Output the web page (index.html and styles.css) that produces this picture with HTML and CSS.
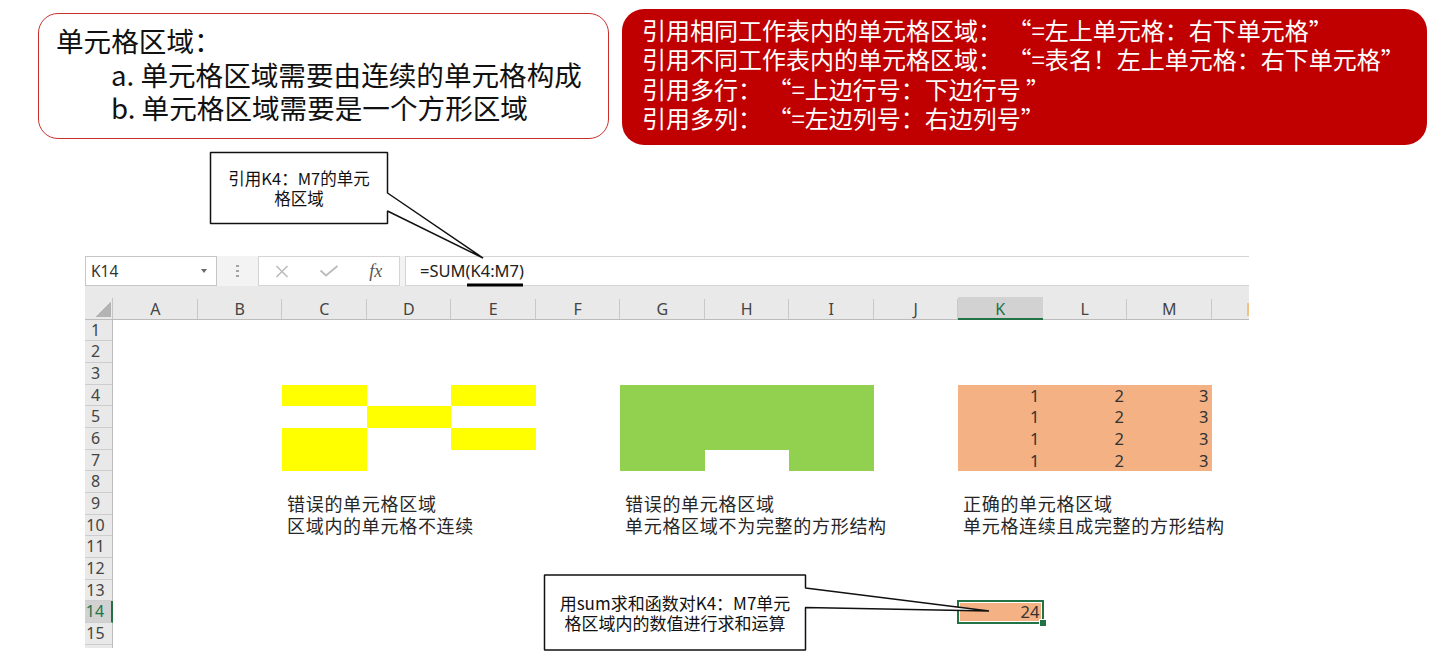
FILE: index.html
```html
<!DOCTYPE html>
<html lang="zh-CN">
<head>
<meta charset="utf-8">
<title>单元格区域</title>
<link rel="stylesheet" href="styles.css">
</head>
<body>
<header class="top">
  <div class="note">
    <p class="note-title">单元格区域：</p>
    <p class="note-item">a. 单元格区域需要由连续的单元格构成</p>
    <p class="note-item">b. 单元格区域需要是一个方形区域</p>
  </div>
  <div class="rules">
    <p>引用相同工作表内的单元格区域： <span class="qo">“</span>=左上单元格：右下单元格<span class="qc">”</span></p>
    <p>引用不同工作表内的单元格区域： <span class="qo">“</span>=表名！左上单元格：右下单元格<span class="qc">”</span></p>
    <p>引用多行： <span class="qo">“</span>=上边行号：下边行号 <span class="qc">”</span></p>
    <p>引用多列： <span class="qo">“</span>=左边列号：右边列号<span class="qc">”</span></p>
  </div>
</header>

<section class="excel">
  <div class="fbar">
    <div class="namebox"><span>K14</span><span class="caret"></span></div>
    <div class="grip"><i></i><i></i><i></i></div>
    <div class="fxbox">
      <span class="slot"><svg width="14" height="13" viewBox="0 0 14 13"><path d="M1.5 1 L12.5 12 M12.5 1 L1.5 12" stroke="#bcbcbc" stroke-width="1.6" fill="none"/></svg></span>
      <span class="slot"><svg width="20" height="12" viewBox="0 0 20 12"><path d="M1.5 5.5 L7 10.5 L18.5 1" stroke="#bcbcbc" stroke-width="1.9" fill="none"/></svg></span>
      <span class="slot fx">fx</span>
    </div>
    <div class="finput">=SUM(K4:M7)</div>
  </div>

  <div class="sheet">
    <div class="corner"></div>
    <div class="ch">A</div><div class="ch">B</div><div class="ch">C</div><div class="ch">D</div><div class="ch">E</div><div class="ch">F</div><div class="ch">G</div><div class="ch">H</div><div class="ch">I</div><div class="ch">J</div><div class="ch ch-sel">K</div><div class="ch">L</div><div class="ch">M</div><div class="ch ch-n"></div>

    <div class="rh">1</div>
    <div class="rh">2</div>
    <div class="rh">3</div>
    <div class="rh">4</div>
    <div class="rh">5</div>
    <div class="rh">6</div>
    <div class="rh">7</div>
    <div class="rh">8</div>
    <div class="rh">9</div>
    <div class="rh">10</div>
    <div class="rh">11</div>
    <div class="rh">12</div>
    <div class="rh">13</div>
    <div class="rh rh-sel">14</div>
    <div class="rh">15</div>
    <div class="rh rh-cut"></div>

    <div class="yellow a-c4"></div>
    <div class="yellow a-e4"></div>
    <div class="yellow a-d5"></div>
    <div class="yellow a-c6"></div>
    <div class="yellow a-e6"></div>

    <div class="green a-g4"></div>
    <div class="green a-g7"></div>
    <div class="green a-i7"></div>

    <div class="orange block a-k4">
      <div class="num">1</div><div class="num">2</div><div class="num">3</div>
      <div class="num">1</div><div class="num">2</div><div class="num">3</div>
      <div class="num">1</div><div class="num">2</div><div class="num">3</div>
      <div class="num">1</div><div class="num">2</div><div class="num">3</div>
    </div>

    <div class="lbl a-c9">错误的单元格区域</div>
    <div class="lbl a-c10">区域内的单元格不连续</div>
    <div class="lbl a-g9">错误的单元格区域</div>
    <div class="lbl a-g10">单元格区域不为完整的方形结构</div>
    <div class="lbl a-k9">正确的单元格区域</div>
    <div class="lbl a-k10">单元格连续且成完整的方形结构</div>

    <div class="orange num k14 a-k14">24</div>
  </div>
</section>

<svg class="overlay" width="1444" height="661" viewBox="0 0 1444 661">
  <polygon points="210.5,152.5 387.5,152.5 387.5,193 483,258 387.5,211 387.5,223.5 210.5,223.5" fill="#fff" stroke="#111" stroke-width="1.5" stroke-linejoin="bevel"/>
  <polygon points="544.5,575 805.5,575 805.5,588 989,611 805.5,607.5 805.5,650 544.5,650" fill="#fff" stroke="#111" stroke-width="1.5" stroke-linejoin="bevel"/>
  <rect x="467" y="283.5" width="56" height="3" fill="#000"/>
</svg>
<div class="callout callout-a">引用K4：M7的单元<br>格区域</div>
<div class="callout callout-b">用sum求和函数对K4：M7单元<br>格区域内的数值进行求和运算</div>
</body>
</html>
```

FILE: styles.css
```css
* { box-sizing: border-box; }
html, body { margin: 0; padding: 0; }
body {
  position: relative;
  width: 1444px;
  height: 661px;
  overflow: hidden;
  background: #fff;
  color: #000;
  font-family: "Noto Sans CJK SC", "Noto Sans", sans-serif;
}
p { margin: 0; }

/* ---------- top notes ---------- */
.top {
  display: flex;
  align-items: flex-start;
  gap: 13px;
  height: 145px;
  padding: 9px 0 0 38px;
}
.note {
  flex: none;
  width: 571px;
  height: 126px;
  margin-top: 4px;
  padding: 10px 0 0 17px;
  border: 1.5px solid #c9302c;
  border-radius: 20px;
  font-size: 27.6px;
  line-height: 33.5px;
  color: #111;
  white-space: nowrap;
}
.note-item { padding-left: 55px; }
.rules {
  flex: none;
  width: 805px;
  height: 136px;
  padding: 5.5px 0 0 20px;
  border-radius: 22px;
  background: #c00000;
  color: #fff;
  font-size: 24px;
  line-height: 29.6px;
  white-space: nowrap;
}
.qo {
  display: inline-block;
  width: 1em;
  text-align: right;
}
.qc {
  display: inline-block;
  width: 1em;
  text-align: left;
}

/* ---------- excel ---------- */
.excel {
  width: 1164px;
  margin: 111px 0 0 85px;
}
.fbar {
  display: flex;
  height: 30px;
  background: #f3f3f3;
}
.namebox {
  flex: none;
  display: flex;
  align-items: center;
  justify-content: space-between;
  width: 132px;
  padding: 0 9px 0 5px;
  background: #fff;
  border: 1px solid #c6c6c6;
  font-family: "Noto Sans", sans-serif;
  font-size: 15.5px;
  color: #333;
}
.caret {
  width: 0;
  height: 0;
  border-left: 3.5px solid transparent;
  border-right: 3.5px solid transparent;
  border-top: 4px solid #6a6a6a;
}
.grip {
  flex: none;
  width: 41px;
  display: flex;
  flex-direction: column;
  align-items: center;
  justify-content: center;
  gap: 2.5px;
}
.grip i {
  display: block;
  width: 2.5px;
  height: 2.5px;
  background: #a3a3a3;
}
.fxbox {
  flex: none;
  display: flex;
  align-items: center;
  width: 142px;
  background: #fff;
  border: 1px solid #d4d4d4;
}
.slot {
  width: 47px;
  display: flex;
  justify-content: center;
  align-items: center;
}
.fx {
  font-family: "Liberation Serif", serif;
  font-style: italic;
  font-size: 18px;
  color: #555;
}
.finput {
  flex: 1;
  margin-left: 5px;
  padding-left: 14px;
  background: #fff;
  border: 1px solid #d4d4d4;
  border-right: 0;
  font-family: "Noto Sans", sans-serif;
  font-size: 16.5px;
  line-height: 28px;
  color: #222;
}

.sheet {
  display: grid;
  grid-template-columns: 28px repeat(13, 84.5px) 37.5px;
  grid-template-rows: 33.5px repeat(15, 21.7px) 3px;
  font-family: "Noto Sans", sans-serif;
}
.corner {
  background:
    linear-gradient(to bottom right, transparent 50%, #b3b3b3 50%) right 2px bottom 2px / 15px 15px no-repeat,
    linear-gradient(#c4c4c4, #c4c4c4) right bottom / 1px 21px no-repeat,
    #e9e9e9;
  border-bottom: 1px solid #bcbcbc;
}
.ch {
  padding-top: 13px;
  text-align: center;
  font-size: 16px;
  line-height: 20px;
  color: #444;
  background: linear-gradient(#c8c8c8, #c8c8c8) right bottom / 1px 20px no-repeat, #e9e9e9;
  border-bottom: 1px solid #bcbcbc;
}
.ch-sel {
  color: #1e6e42;
  background: linear-gradient(#d2d2d2, #d2d2d2) left bottom / 100% 21px no-repeat, #e9e9e9;
  border-bottom: 2px solid #217346;
}
.ch-n {
  background: linear-gradient(#f3c27f, #f3c27f) right 0 bottom 3px / 2px 13px no-repeat, #e9e9e9;
}
.rh {
  grid-column: 1;
  padding-right: 6px;
  text-align: center;
  font-size: 16px;
  line-height: 21px;
  color: #444;
  background: #e9e9e9;
  border-bottom: 1px solid #cdcdcd;
  border-right: 1px solid #bcbcbc;
}
.rh-sel {
  color: #217346;
  background: #d2d2d2;
  border-right: 2px solid #217346;
}
.rh-cut { border-bottom: 0; }

.yellow { background: #ffff00; }
.green { background: #92d050; }
.orange { background: #f4b183; }

.a-c4 { grid-area: 5 / 4; }
.a-e4 { grid-area: 5 / 6; }
.a-d5 { grid-area: 6 / 5; }
.a-c6 { grid-area: 7 / 4 / 9 / 5; }
.a-e6 { grid-area: 7 / 6; }
.a-g4 { grid-area: 5 / 8 / 8 / 11; }
.a-g7 { grid-area: 8 / 8; }
.a-i7 { grid-area: 8 / 10; }
.a-k4 { grid-area: 5 / 12 / 9 / 15; }
.a-c9 { grid-area: 10 / 4; }
.a-c10 { grid-area: 11 / 4; }
.a-g9 { grid-area: 10 / 8; }
.a-g10 { grid-area: 11 / 8; }
.a-k9 { grid-area: 10 / 12; }
.a-k10 { grid-area: 11 / 12; }
.a-k14 { grid-area: 15 / 12; }

.block {
  display: grid;
  grid-template-columns: repeat(3, 1fr);
  grid-template-rows: repeat(4, 1fr);
}
.num {
  padding-right: 3px;
  text-align: right;
  font-size: 16.5px;
  line-height: 21.7px;
  color: #333;
}
.lbl {
  padding-left: 5px;
  white-space: nowrap;
  font-family: "Noto Sans CJK SC", sans-serif;
  font-size: 18px;
  letter-spacing: 0.7px;
  line-height: 21.7px;
  color: #262626;
}
.k14 {
  position: relative;
  box-shadow: 0 0 0 1px #217346, inset 0 0 0 1px #217346, inset 0 0 0 2px #fff;
}
.k14::after {
  content: "";
  position: absolute;
  right: -4px;
  bottom: -4px;
  width: 6px;
  height: 6px;
  background: #217346;
  border: 1px solid #fff;
}

/* ---------- callouts ---------- */
.overlay {
  position: absolute;
  left: 0;
  top: 0;
  pointer-events: none;
}
.callout {
  position: absolute;
  display: flex;
  align-items: center;
  justify-content: center;
  text-align: center;
  color: #111;
  font-family: "Noto Sans CJK SC", sans-serif;
  line-height: 20px;
}
.callout-a {
  left: 211px;
  top: 153px;
  width: 176px;
  height: 70px;
  font-size: 16.5px;
}
.callout-b {
  left: 545px;
  top: 576px;
  width: 260px;
  height: 74px;
  font-size: 17px;
}
```
